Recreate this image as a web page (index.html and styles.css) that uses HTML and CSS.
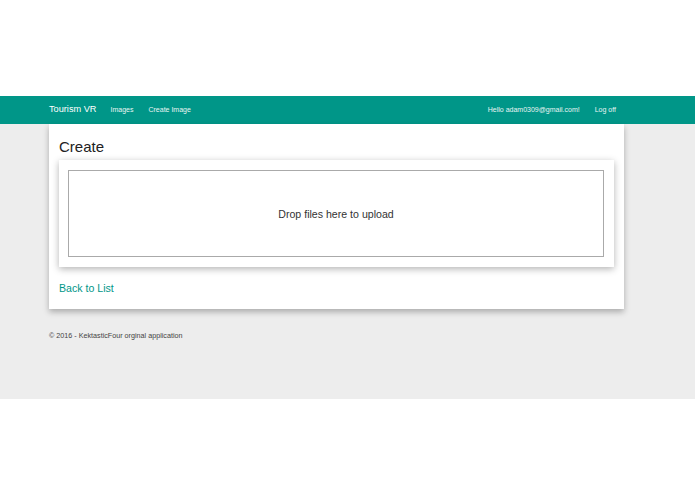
FILE: index.html
```html
<!DOCTYPE html>
<html lang="en">
<head>
    <meta charset="UTF-8">
    <title>Create - Tourism VR</title>
    <link rel="stylesheet" href="styles.css">
</head>
<body>

    <div class="top-space"></div>

    <div class="navbar">
        <div class="nav-left">
            <a class="brand" href="#">Tourism VR</a>
            <a class="nav-link" href="#">Images</a>
            <a class="nav-link" href="#">Create Image</a>
        </div>
        <div class="nav-right">
            <a class="nav-link" href="#">Hello adam0309@gmail.com!</a>
            <a class="nav-link" href="#">Log off</a>
        </div>
    </div>

    <div class="page">
        <div class="body-content">
            <h2 class="title">Create</h2>

            <div class="dropzone-card">
                <div class="dropzone">Drop files here to upload</div>
            </div>

            <a class="back-link" href="#">Back to List</a>
        </div>

        <footer class="footer">
            <p>&copy; 2016 - KektasticFour orginal application</p>
        </footer>
    </div>

</body>
</html>
```

FILE: styles.css
```css
* {
    margin: 0;
    padding: 0;
    box-sizing: border-box;
    font-family: "Liberation Sans", Arial, sans-serif;
}

body {
    background-color: white;
    color: #333;
}

a {
    text-decoration: none;
}

.top-space {
    height: 96px;
}

.navbar {
    background-color: #009688;
    height: 28px;
    display: flex;
    align-items: center;
    justify-content: space-between;
    padding: 0 79px 2px 49px;
}

.nav-left,
.nav-right {
    display: flex;
    align-items: center;
}

.brand {
    color: white;
    font-size: 9.2px;
    margin-right: 14px;
}

.nav-link {
    color: #e8f5f3;
    font-size: 7px;
    margin-right: 15px;
}

.nav-left .nav-link:last-child,
.nav-right .nav-link:last-child {
    margin-right: 0;
}

.page {
    background-color: #ededed;
    height: 275px;
    padding: 0 71px 0 49px;
}

.body-content {
    background: white;
    padding: 14px 10px 15px 10px;
    box-shadow: 0 3px 6px rgba(0, 0, 0, 0.28);
}

.title {
    font-size: 15px;
    font-weight: normal;
    color: #222;
    line-height: 18px;
    margin-bottom: 4px;
}

.dropzone-card {
    background: white;
    padding: 10px 10px 10px 9px;
    box-shadow: 0 2px 7px rgba(0, 0, 0, 0.3);
}

.dropzone {
    border: 1px solid #aaa;
    height: 87px;
    display: flex;
    align-items: center;
    justify-content: center;
    font-size: 10.6px;
    color: #333;
}

.back-link {
    display: block;
    color: #009688;
    font-size: 10.6px;
    margin-top: 15px;
}

.footer {
    padding-top: 22px;
    font-size: 7.2px;
    color: #444;
}
```
